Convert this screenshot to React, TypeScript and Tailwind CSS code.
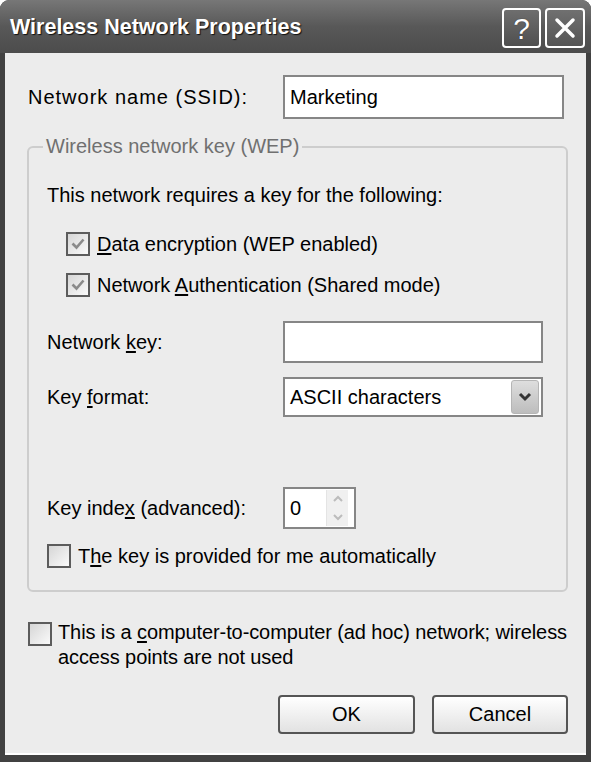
import React from 'react';

function Check({ checked }: { checked?: boolean }) {
  return (
    <span className="flex h-[24px] w-[24px] shrink-0 items-center justify-center border-2 border-[#5c5c5c] bg-linear-to-br from-[#d6d6d6] to-[#fafafa]">
      {checked && (
        <svg width="16" height="16" viewBox="0 0 16 16">
          <path d="M2.5 7.5 L6.5 11.5 L13.5 3.5" fill="none" stroke="#8a8a8a" strokeWidth="2.6" />
        </svg>
      )}
    </span>
  );
}

function TextBox({ value, width }: { value?: string; width: string }) {
  return (
    <div className={`${width} flex h-full items-center border-2 border-[#868686] bg-white pl-[5px]`}>
      {value}
    </div>
  );
}

export default function App() {
  return (
    <div className="h-[762px] w-[591px] overflow-hidden bg-white font-['Liberation_Sans',Arial,sans-serif] text-[20px] leading-[25px] text-black">
      <div className="flex h-full flex-col rounded-t-[9px] bg-[#414141]">
        {/* title bar */}
        <div className="flex h-[53px] shrink-0 items-center justify-between rounded-t-[9px] bg-linear-to-b from-[#777] via-[#585858] to-[#4c4c4c] pl-[10px] pr-[6px]">
          <span className="mt-[2px] text-[21.5px] font-bold text-white [text-shadow:1px_1px_1px_#111]">
            Wireless Network Properties
          </span>
          <div className="mt-[3px] flex gap-[4px]">
            <div className="flex h-[40px] w-[39px] items-center justify-center rounded-[4px] border-2 border-white bg-linear-to-b from-[#6e6e6e] to-[#4f4f4f] text-[30px] text-white [text-shadow:0_0_1px_#222]">
              ?
            </div>
            <div className="flex h-[40px] w-[40px] items-center justify-center rounded-[4px] border-2 border-white bg-linear-to-b from-[#707070] to-[#555]">
              <svg width="24" height="24" viewBox="0 0 24 24">
                <path d="M4 4 L20 20 M20 4 L4 20" stroke="white" strokeWidth="3.5" strokeLinecap="round" />
              </svg>
            </div>
          </div>
        </div>

        {/* client area */}
        <div className="mx-[5px] flex h-[702px] shrink-0 flex-col border-b-2 border-white bg-[#ececec] pl-[22px] pr-[18px]">
          <div className="mt-[22px] flex h-[44px] items-center">
            <span className="pl-[1px] tracking-[1px]">Network name (SSID):</span>
            <div className="ml-auto mr-[4px] h-full">
              <TextBox value="Marketing" width="w-[281px]" />
            </div>
          </div>

          <fieldset className="mt-[16px] rounded-[6px] border-2 border-[#cdcdcd]">
            <legend className="ml-[14px] px-[3px] leading-[23px] text-[#707070]">
              Wireless network key (WEP)
            </legend>
            <div className="flex flex-col pb-[22px] pl-[18px]">
              <div className="mt-[25px] flex h-[24px] items-center">
                This network requires a key for the following:
              </div>
              <div className="mt-[25px] flex h-[24px] items-center gap-[7px] pl-[19px]">
                <Check checked />
                <span>
                  <u className="underline-offset-2">D</u>ata encryption (WEP enabled)
                </span>
              </div>
              <div className="mt-[17px] flex h-[24px] items-center gap-[7px] pl-[19px]">
                <Check checked />
                <span>
                  Network <u className="underline-offset-2">A</u>uthentication (Shared mode)
                </span>
              </div>
              <div className="mt-[24px] flex h-[42px] items-center">
                <span className="w-[236px]">
                  Network <u className="underline-offset-2">k</u>ey:
                </span>
                <TextBox width="w-[260px]" />
              </div>
              <div className="mt-[14px] flex h-[40px] items-center">
                <span className="w-[236px]">
                  Key <u className="underline-offset-2">f</u>ormat:
                </span>
                <div className="flex h-full w-[260px] items-center border-2 border-[#868686] bg-white pl-[5px] pr-[2px]">
                  <span className="flex-1">ASCII characters</span>
                  <div className="flex h-[34px] w-[28px] items-center justify-center rounded-[3px] border border-[#b5b5b5] bg-linear-to-b from-[#dedede] to-[#bdbdbd]">
                    <svg width="14" height="10" viewBox="0 0 14 10">
                      <path d="M2 2 L7 7 L12 2" fill="none" stroke="#333" strokeWidth="3" />
                    </svg>
                  </div>
                </div>
              </div>
              <div className="mt-[70px] flex h-[42px] items-center">
                <span className="w-[236px]">
                  Key inde<u className="underline-offset-2">x</u> (advanced):
                </span>
                <div className="flex h-full w-[73px] items-center border-2 border-[#868686] bg-white pl-[5px] pr-[6px]">
                  <span className="flex-1">0</span>
                  <div className="flex h-[36px] w-[22px] flex-col border-l border-[#e4e4e4] bg-[#f0f0f0]">
                    <div className="flex flex-1 items-center justify-center">
                      <svg width="12" height="8" viewBox="0 0 12 8">
                        <path d="M2 6 L6 2 L10 6" fill="none" stroke="#bcbcbc" strokeWidth="2" />
                      </svg>
                    </div>
                    <div className="flex flex-1 items-center justify-center">
                      <svg width="12" height="8" viewBox="0 0 12 8">
                        <path d="M2 2 L6 6 L10 2" fill="none" stroke="#bcbcbc" strokeWidth="2" />
                      </svg>
                    </div>
                  </div>
                </div>
              </div>
              <div className="mt-[15px] flex h-[24px] items-center gap-[7px]">
                <Check />
                <span>
                  T<u className="underline-offset-2">h</u>e key is provided for me automatically
                </span>
              </div>
            </div>
          </fieldset>

          <div className="mt-[28px] flex gap-[6px] pl-[1px]">
            <div className="mt-[2px]">
              <Check />
            </div>
            <span className="whitespace-nowrap leading-[25px] tracking-[-0.1px]">
              This is a <u className="underline-offset-2">c</u>omputer-to-computer (ad hoc) network; wireless
              <br />
              access points are not used
            </span>
          </div>

          <div className="mt-[25px] flex justify-end gap-[17px]">
            <button className="flex h-[39px] w-[137px] items-center justify-center rounded-[4px] border-2 border-[#555] bg-linear-to-b from-white to-[#e2e2e2]">
              OK
            </button>
            <button className="flex h-[39px] w-[136px] items-center justify-center rounded-[4px] border-2 border-[#555] bg-linear-to-b from-white to-[#e2e2e2]">
              Cancel
            </button>
          </div>
        </div>
      </div>
    </div>
  );
}
